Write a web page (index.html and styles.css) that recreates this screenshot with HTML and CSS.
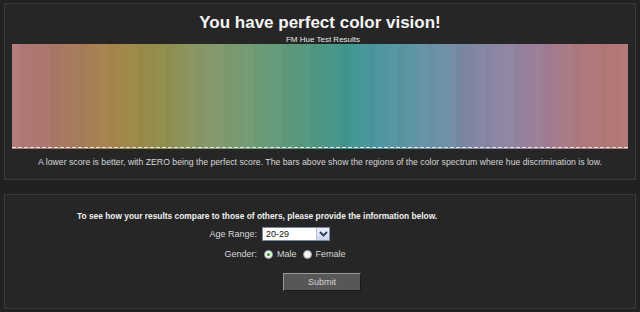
FILE: index.html
```html
<!DOCTYPE html>
<html>
<head>
<meta charset="utf-8">
<link rel="stylesheet" href="styles.css">
</head>
<body>
<div class="panel results">
  <h1 class="title">You have perfect color vision!</h1>
  <div class="subtitle">FM Hue Test Results</div>
  <div class="spectrum">
    <div class="bands"></div>
    <div class="dashline"></div>
  </div>
  <p class="caption">A lower score is better, with ZERO being the perfect score. The bars above show the regions of the color spectrum where hue discrimination is low.</p>
</div>
<div class="panel form">
  <p class="lead">To see how your results compare to those of others, please provide the information below.</p>
  <div class="row age">
    <span class="label">Age Range:</span>
    <div class="select">
      <span class="select-value">20-29</span>
      <span class="select-btn">
        <svg width="9" height="6" viewBox="0 0 9 6"><path d="M1 1 L4.5 4.5 L8 1" fill="none" stroke="#2b3a55" stroke-width="1.8"/></svg>
      </span>
    </div>
  </div>
  <div class="row gender">
    <span class="label">Gender:</span>
    <div class="radios">
      <span class="radio checked"></span><span class="opt">Male</span>
      <span class="radio"></span><span class="opt">Female</span>
    </div>
  </div>
  <div class="actions">
    <button class="submit">Submit</button>
  </div>
</div>
</body>
</html>
```
FILE: styles.css
```css
html, body {
  margin: 0;
  padding: 0;
  background: #212121;
  font-family: "Liberation Sans", Arial, sans-serif;
  color: #dcdcdc;
}
body {
  padding: 3px 4px 0;
}
.panel {
  background: #262626;
  border: 1px solid #3b3b3b;
  box-sizing: border-box;
}
.results {
  height: 177px;
  padding: 0 7px;
  display: flex;
  flex-direction: column;
  align-items: stretch;
}
.title {
  margin: 8px 0 0;
  font-size: 17px;
  line-height: 22px;
  font-weight: bold;
  color: #f4f4f4;
  text-align: center;
}
.subtitle {
  font-size: 8px;
  line-height: 9px;
  text-align: center;
  color: #e8e8e8;
  margin-top: 1px;
  padding-left: 6px;
}
.spectrum {
  height: 105px;
  display: flex;
  flex-direction: column;
  background: linear-gradient(to right,
    #b47c7c 0%,
    #ac7670 4.7%,
    #a67a5c 10%,
    #a8844c 15.8%,
    #9c8a48 20%,
    #8f8e4a 24.4%,
    #88986a 31%,
    #7a9a70 36%,
    #6a9c78 40.8%,
    #56987e 47%,
    #3f978e 54.7%,
    #4c96a0 59%,
    #5a96a2 63.9%,
    #6a92a8 68%,
    #7090a8 70.5%,
    #7b86a0 73.7%,
    #8a86a4 78%,
    #8f86a2 80.3%,
    #a07c94 87%,
    #aa7a84 90%,
    #b07878 93.5%,
    #b47878 100%);
}
.bands {
  flex: 1;
  background: repeating-linear-gradient(to right,
    rgba(255,255,255,0.015) 0px,
    rgba(255,255,255,0.015) 9px,
    rgba(0,0,0,0.015) 9px,
    rgba(0,0,0,0.015) 17px,
    rgba(255,255,255,0) 17px,
    rgba(255,255,255,0) 29px);
}
.dashline {
  height: 1px;
  margin-bottom: 1px;
  background: repeating-linear-gradient(to right, #e8e8e8 0 4px, transparent 4px 6px);
}
.caption {
  margin: 7px 0 0;
  font-size: 8.7px;
  line-height: 12px;
  text-align: center;
  color: #d6d6d6;
}
.form {
  margin-top: 14px;
  height: 115px;
  padding-top: 15px;
  display: flex;
  flex-direction: column;
}
.lead {
  margin: 0 0 0 72px;
  width: 400px;
  font-size: 8.4px;
  line-height: 12px;
  font-weight: bold;
  color: #f0f0f0;
}
.row {
  display: flex;
  align-items: center;
}
.age {
  margin-top: 5px;
}
.gender {
  margin-top: 8px;
}
.label {
  width: 257px;
  text-align: right;
  font-size: 9px;
  color: #d8d8d8;
  padding-right: 5px;
  box-sizing: border-box;
}
.select {
  width: 68px;
  height: 14px;
  box-sizing: border-box;
  border: 1px solid #7a8aa8;
  background: #fff;
  display: flex;
  align-items: center;
  justify-content: space-between;
}
.select-value {
  font-size: 9px;
  color: #111;
  padding-left: 3px;
}
.select-btn {
  width: 12px;
  height: 12px;
  background: linear-gradient(#eef2fb, #c9d4ea);
  border-left: 1px solid #b8c4dc;
  display: flex;
  align-items: center;
  justify-content: center;
}
.radios {
  display: flex;
  align-items: center;
  margin-left: 2px;
}
.radio {
  width: 7px;
  height: 7px;
  border-radius: 50%;
  background: #f4f4f4;
  border: 1px solid #9a9a9a;
  display: inline-flex;
  align-items: center;
  justify-content: center;
}
.radio.checked::after {
  content: "";
  width: 3px;
  height: 3px;
  border-radius: 50%;
  background: #1ea01e;
}
.opt {
  font-size: 9px;
  color: #d8d8d8;
  margin: 0 6px 0 4px;
}
.actions {
  margin-top: 12px;
  padding-left: 278px;
}
.submit {
  width: 78px;
  height: 18px;
  background: #575757;
  color: #d4d4d4;
  font-family: "Liberation Sans", Arial, sans-serif;
  font-size: 9px;
  border: 1px solid;
  border-color: #9a9a9a #1a1a1a #1a1a1a #9a9a9a;
  padding: 0;
}
```
